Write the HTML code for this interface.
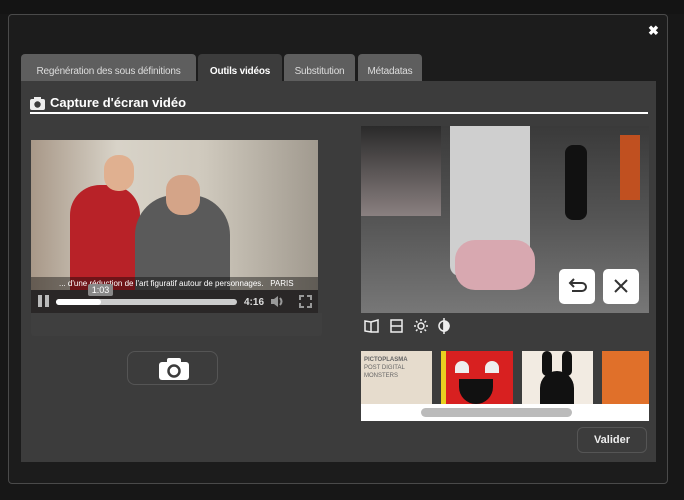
<!DOCTYPE html>
<html><head><meta charset="utf-8"><style>
*{box-sizing:border-box;margin:0;padding:0}
body{width:684px;height:500px;background:#171717;font-family:"Liberation Sans",sans-serif;position:relative;overflow:hidden}
.abs{position:absolute}
.modal{left:8px;top:14px;width:660px;height:470px;background:#1c1c1c;border:1px solid #4a4a4a;border-radius:4px}
.tab{position:absolute;top:54px;background:#5e5e5e;color:#ddd;font-size:10px;letter-spacing:-0.2px;white-space:nowrap;overflow:hidden;text-align:center;border-radius:4px 4px 0 0;height:27px;line-height:36px}
.panel{left:21px;top:81px;width:635px;height:381px;background:#3c3c3c}
.thumb{position:absolute;top:351px;height:53px;overflow:hidden}
</style></head><body>
<div class="abs" style="left:0;top:0;width:684px;height:14px;background:#141414"></div>
<div class="abs modal"></div>
<div class="abs" style="left:648px;top:23px;color:#fff;font-weight:bold;font-size:13px">✖</div>
<div class="tab" style="left:21px;width:175px">Regénération des sous définitions</div>
<div class="tab" style="left:198px;width:84px;background:#3c3c3c;color:#fff;font-weight:bold">Outils vidéos</div>
<div class="tab" style="left:284px;width:71px">Substitution</div>
<div class="tab" style="left:358px;width:64px">Métadatas</div>
<div class="abs panel"></div>
<svg class="abs" style="left:30px;top:97px" width="15" height="13"><rect x="0" y="2" width="15" height="11" rx="2" fill="#eee"/><rect x="4" y="0" width="7" height="3" fill="#eee"/><circle cx="7.5" cy="7.5" r="3.2" fill="#3c3c3c"/></svg>
<div class="abs" style="left:50px;top:95px;color:#fff;font-weight:bold;font-size:13px">Capture d'écran vidéo</div>
<div class="abs" style="left:30px;top:112px;width:618px;height:2px;background:#fff"></div>
<!-- left video -->
<div class="abs" style="left:31px;top:140px;width:287px;height:173px;background:linear-gradient(90deg,#a89888 0%,#d8d3c8 30%,#cfc9bd 60%,#a19a8f 100%)"></div>
<div class="abs" style="left:70px;top:185px;width:70px;height:105px;background:#b82228;border-radius:30px 30px 0 0"></div>
<div class="abs" style="left:135px;top:195px;width:95px;height:95px;background:#5a5a5a;border-radius:40px 40px 0 0"></div>
<div class="abs" style="left:104px;top:155px;width:30px;height:36px;background:#e0b090;border-radius:14px"></div>
<div class="abs" style="left:166px;top:175px;width:34px;height:40px;background:#d4a488;border-radius:15px"></div>
<div class="abs" style="left:31px;top:277px;width:287px;height:13px;background:rgba(0,0,0,.4);color:#fff;font-size:8px;line-height:13px;padding-left:28px;white-space:nowrap">... d'une réduction de l'art figuratif autour de personnages.&nbsp;&nbsp; PARIS</div>
<div class="abs" style="left:31px;top:290px;width:287px;height:23px;background:#2a2727"></div>
<div class="abs" style="left:38px;top:295px;width:4px;height:12px;background:#bbb"></div><div class="abs" style="left:45px;top:295px;width:4px;height:12px;background:#bbb"></div>
<div class="abs" style="left:56px;top:299px;width:181px;height:6px;background:#ccc;border-radius:3px"></div>
<div class="abs" style="left:56px;top:299px;width:45px;height:6px;background:#fff;border-radius:3px"></div>
<div class="abs" style="left:88px;top:284px;width:25px;height:12px;background:#888;color:#fff;font-size:9px;text-align:center;line-height:12px;border-radius:2px">1:03</div>
<div class="abs" style="left:244px;top:297px;color:#ddd;font-size:10px;font-weight:bold">4:16</div>
<svg class="abs" style="left:270px;top:295px" width="16" height="13"><path d="M1 4h3l4-3v11l-4-3H1z" fill="#999"/><path d="M10 3q3 3.5 0 7" stroke="#999" stroke-width="2" fill="none"/></svg>
<svg class="abs" style="left:299px;top:295px" width="13" height="13" stroke="#999" stroke-width="2" fill="none"><path d="M1 5V1h4M8 1h4v4M12 8v4H8M5 12H1V8"/></svg>
<div class="abs" style="left:31px;top:313px;width:291px;height:23px;background:#3f3f3f;border-radius:0 0 3px 3px"></div>
<div class="abs" style="left:127px;top:351px;width:91px;height:34px;border:1px solid #555;border-radius:8px"></div>
<svg class="abs" style="left:159px;top:358px" width="30" height="22"><rect x="0" y="4" width="30" height="18" rx="3" fill="#fff"/><rect x="8" y="0" width="14" height="6" rx="2" fill="#fff"/><circle cx="15" cy="13" r="5.5" fill="none" stroke="#3c3c3c" stroke-width="2.5"/></svg>
<!-- right image -->
<div class="abs" style="left:361px;top:126px;width:288px;height:187px;background:linear-gradient(180deg,#3a3a3a 0%,#555 50%,#777 100%)"></div>
<div class="abs" style="left:361px;top:126px;width:80px;height:90px;background:linear-gradient(180deg,#2a2a2a,#8a8080)"></div>
<div class="abs" style="left:450px;top:126px;width:80px;height:150px;background:#cfcfcf;border-radius:0 0 10px 10px"></div>
<div class="abs" style="left:455px;top:240px;width:80px;height:50px;background:#d8a8b0;border-radius:20px"></div>
<div class="abs" style="left:620px;top:135px;width:20px;height:65px;background:#c05020"></div>
<div class="abs" style="left:565px;top:145px;width:22px;height:75px;background:#111;border-radius:8px"></div>
<div class="abs" style="left:559px;top:269px;width:36px;height:35px;background:#fff;border-radius:5px"><svg width="36" height="35" fill="none" stroke="#333" stroke-width="2"><path d="M12 14h11a4 4 0 0 1 0 8h-10M15 10l-4 4 4 4"/></svg></div>
<div class="abs" style="left:603px;top:269px;width:36px;height:35px;background:#fff;border-radius:5px"><svg width="36" height="35" stroke="#333" stroke-width="2"><path d="M12 11l12 12M24 11l-12 12"/></svg></div>
<svg class="abs" style="left:363px;top:318px" width="90" height="16" fill="none" stroke="#eee" stroke-width="1.5"><path d="M2 3l6 1v10l-6-1zM8 4l7-2v12l-7 0"/><rect x="28" y="2" width="11" height="12"/><path d="M28 8h11"/><circle cx="58" cy="8" r="3"/><path d="M58 1v2M58 13v2M51 8h2M63 8h2M53 3l1.5 1.5M61.5 11.5L63 13M53 13l1.5-1.5M61.5 4.5L63 3"/><circle cx="81" cy="8" r="5"/><path d="M81 3a5 5 0 0 1 0 10z" fill="#eee"/><path d="M81 0v16"/></svg>
<div class="thumb" style="left:361px;width:71px;background:#e6dccd;color:#666;font-size:6px;padding:5px 3px;line-height:8px"><b>PICTOPLASMA</b><br>POST DIGITAL MONSTERS</div>
<div class="thumb" style="left:441px;width:72px;background:#d82020"><div class="abs" style="left:0;top:0;width:5px;height:53px;background:#e8d020"></div><div class="abs" style="left:14px;top:10px;width:14px;height:12px;background:#eee;border-radius:7px 7px 0 0"></div><div class="abs" style="left:44px;top:10px;width:14px;height:12px;background:#eee;border-radius:7px 7px 0 0"></div><div class="abs" style="left:18px;top:28px;width:34px;height:25px;background:#111;border-radius:0 0 17px 17px"></div></div>
<div class="thumb" style="left:522px;width:71px;background:#f2ebe2"><div class="abs" style="left:20px;top:0;width:10px;height:25px;background:#111;border-radius:5px"></div><div class="abs" style="left:40px;top:0;width:10px;height:25px;background:#111;border-radius:5px"></div><div class="abs" style="left:18px;top:20px;width:34px;height:33px;background:#111;border-radius:17px 17px 0 0"></div></div>
<div class="thumb" style="left:602px;width:47px;background:#e0702a"></div>
<div class="abs" style="left:361px;top:404px;width:288px;height:17px;background:#fff"></div>
<div class="abs" style="left:421px;top:408px;width:151px;height:9px;background:#bbb;border-radius:5px"></div>
<div class="abs" style="left:577px;top:427px;width:70px;height:26px;border:1px solid #555;border-radius:6px;color:#eee;font-weight:bold;font-size:11px;text-align:center;line-height:24px">Valider</div>
</body></html>
